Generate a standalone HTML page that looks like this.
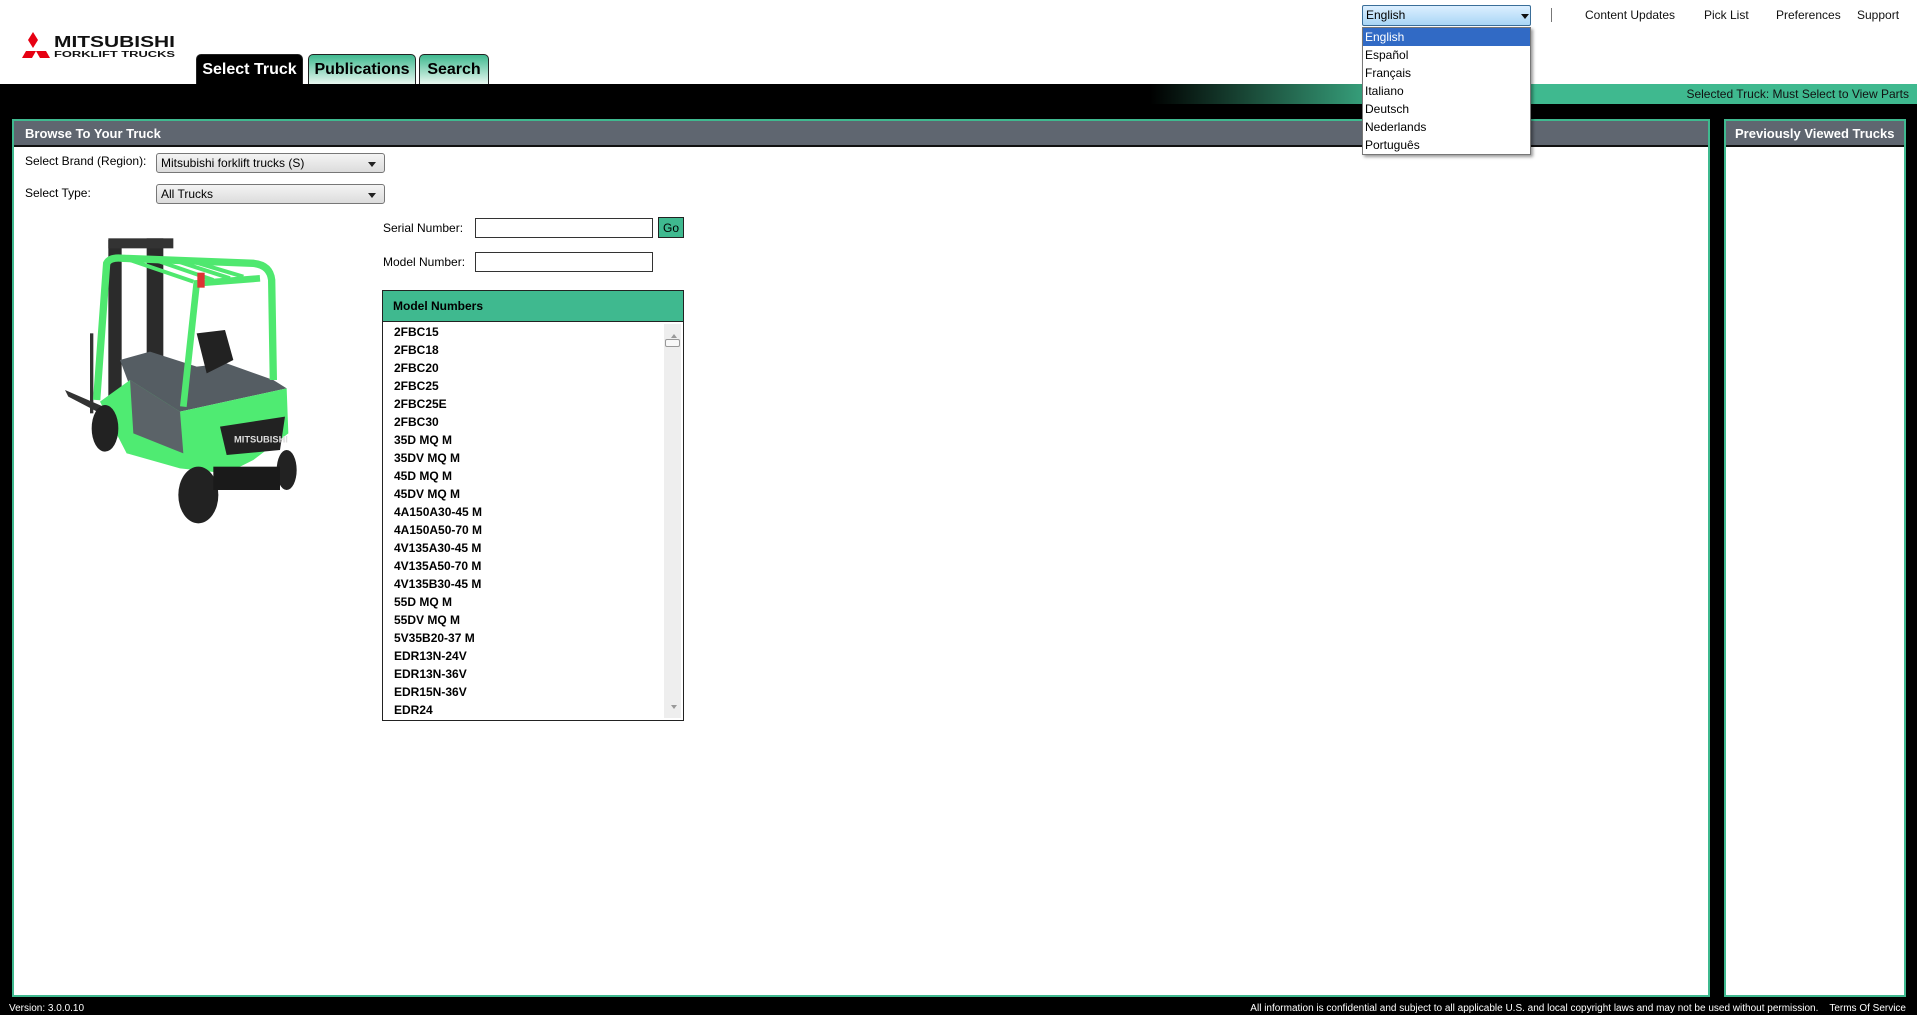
<!DOCTYPE html>
<html><head><meta charset="utf-8"><style>
*{box-sizing:border-box;margin:0;padding:0}
body{width:1917px;height:1015px;position:relative;background:#000;font-family:"Liberation Sans",Arial,sans-serif;overflow:hidden}
.abs{position:absolute}
#top{left:0;top:0;width:1917px;height:84px;background:#fff}
.tab{position:absolute;top:54px;height:30px;border:1px solid #222;border-bottom:none;border-radius:5px 5px 0 0;font-weight:bold;font-size:16px;padding:6px 0 0 0;text-align:center;background:linear-gradient(#3fb98f,#e8f7f0);color:#000;white-space:nowrap}
.nav{position:absolute;top:8px;font-size:12px;color:#111}
.sel{position:absolute;height:20px;border:1px solid #777;border-radius:3px;background:linear-gradient(#f4f4f4,#dcdcdc);font-size:12px;padding:2px 4px;color:#000}
.sel:after{content:"";position:absolute;right:8px;top:8px;border:4px solid transparent;border-top:5px solid #222}
.lbl{position:absolute;font-size:12px;color:#000}
.inp{position:absolute;background:#fff;border:1px solid #333}
.row{height:18px;font-size:12px;font-weight:bold;line-height:18px;padding-left:11px;color:#000}
</style></head><body>
<div id="top" class="abs">
<svg class="abs" style="left:22px;top:32px" width="155" height="28" viewBox="0 0 155 28">
<polygon points="11,0 16,8 11,16 6,8" fill="#e60012"/>
<polygon points="0,26 10,26 14,19 4,19" fill="#e60012"/>
<polygon points="8,19 18,19 22,26 12,26" fill="#e60012" transform="translate(6,0)"/>
<text x="32" y="15" font-family="Liberation Sans" font-weight="900" font-size="16" fill="#111" textLength="121" lengthAdjust="spacingAndGlyphs">MITSUBISHI</text>
<text x="32" y="25" font-family="Liberation Sans" font-weight="900" font-size="8" fill="#111" textLength="121" lengthAdjust="spacingAndGlyphs">FORKLIFT TRUCKS</text>
</svg>
<div class="tab" style="left:196px;width:107px;background:#000;color:#fff">Select Truck</div>
<div class="tab" style="left:308px;width:108px">Publications</div>
<div class="tab" style="left:419px;width:70px">Search</div>
<div class="abs" style="left:1551px;top:8px;width:1px;height:14px;background:#777"></div>
<div class="nav" style="left:1585px">Content Updates</div>
<div class="nav" style="left:1704px">Pick List</div>
<div class="nav" style="left:1776px">Preferences</div>
<div class="nav" style="left:1857px">Support</div>
</div>
<div class="abs" style="left:0;top:84px;width:1917px;height:20px;background:linear-gradient(90deg,#000 0,#000 1150px,#1a4a38 1250px,#3fb98f 1400px,#3fb98f 100%)"></div>
<div class="abs" style="right:8px;top:87px;font-size:12px;color:#111">Selected Truck: Must Select to View Parts</div>

<div class="abs" style="left:12px;top:119px;width:1698px;height:878px;background:#fff;border:2px solid #3fb98f">
<div style="height:26px;background:#5f6670;border-bottom:2px solid #111;color:#fff;font-weight:bold;font-size:13px;padding:5px 0 0 11px">Browse To Your Truck</div>
</div>
<div class="abs" style="left:1724px;top:119px;width:182px;height:878px;background:#fff;border:2px solid #3fb98f">
<div style="height:26px;background:#5f6670;border-bottom:2px solid #111;color:#fff;font-weight:bold;font-size:13px;padding:5px 0 0 9px">Previously Viewed Trucks</div>
</div>

<div class="lbl" style="left:25px;top:154px">Select Brand (Region):</div>
<div class="sel" style="left:156px;top:153px;width:229px">Mitsubishi forklift trucks (S)</div>
<div class="lbl" style="left:25px;top:186px">Select Type:</div>
<div class="sel" style="left:156px;top:184px;width:229px">All Trucks</div>

<div class="lbl" style="left:383px;top:221px">Serial Number:</div>
<div class="inp" style="left:475px;top:218px;width:178px;height:20px"></div>
<div class="abs" style="left:658px;top:217px;width:26px;height:21px;background:#3fb98f;border:1px solid #222;font-size:12px;text-align:center;padding-top:3px">Go</div>
<div class="lbl" style="left:383px;top:255px">Model Number:</div>
<div class="inp" style="left:475px;top:252px;width:178px;height:20px"></div>

<div class="abs" style="left:382px;top:290px;width:302px;height:431px;border:1px solid #222;background:#fff">
<div style="height:31px;background:#3fb98f;border-bottom:1px solid #222;font-weight:bold;font-size:12px;padding:8px 0 0 10px">Model Numbers</div>
<div style="padding-top:1px">
<div class="row">2FBC15</div><div class="row">2FBC18</div><div class="row">2FBC20</div><div class="row">2FBC25</div><div class="row">2FBC25E</div><div class="row">2FBC30</div><div class="row">35D MQ M</div><div class="row">35DV MQ M</div><div class="row">45D MQ M</div><div class="row">45DV MQ M</div><div class="row">4A150A30-45 M</div><div class="row">4A150A50-70 M</div><div class="row">4V135A30-45 M</div><div class="row">4V135A50-70 M</div><div class="row">4V135B30-45 M</div><div class="row">55D MQ M</div><div class="row">55DV MQ M</div><div class="row">5V35B20-37 M</div><div class="row">EDR13N-24V</div><div class="row">EDR13N-36V</div><div class="row">EDR15N-36V</div><div class="row">EDR24</div>
</div>
<div class="abs" style="right:2px;top:33px;width:17px;height:394px;background:#eee"></div>
<div class="abs" style="right:6px;top:40px;width:0;height:0;border:3px solid transparent;border-bottom:4px solid #999"></div>
<div class="abs" style="right:3px;top:48px;width:15px;height:8px;border:1px solid #999;background:#f8f8f8;border-radius:2px"></div>
<div class="abs" style="right:6px;bottom:8px;width:0;height:0;border:3px solid transparent;border-top:4px solid #999"></div>
</div>

<svg class="abs" style="left:40px;top:220px" width="280" height="320" viewBox="0 0 840 960">
<polygon points="75,510 190,560 200,590 85,530" fill="#333"/>
<rect x="205" y="60" width="40" height="520" fill="#2b2b2b"/>
<rect x="320" y="55" width="50" height="430" fill="#2b2b2b"/>
<rect x="205" y="55" width="195" height="30" fill="#333"/>
<rect x="150" y="340" width="10" height="240" fill="#333"/>
<path d="M240,420 L330,395 L470,440 L560,430 L700,480 L740,505 L420,575 L270,500 Z" fill="#555d63"/>
<path d="M180,545 L270,480 L420,575 L740,505 L745,640 L640,720 L560,760 L420,745 L260,700 Z" fill="#4feb72"/>
<path d="M270,480 L420,575 L430,700 L280,640 Z" fill="#5b6368"/>
<path d="M540,620 L735,590 L720,690 L560,705 Z" fill="#222"/>
<text x="582" y="668" font-family="Liberation Sans" font-weight="bold" font-size="28" fill="#ddd">MITSUBISHI</text>
<path d="M470,340 L555,330 L580,420 L500,460 Z" fill="#222"/>
<path d="M170,540 L200,130 Q210,110 250,115 L640,130 Q690,135 695,180 L700,480" fill="none" stroke="#4fe86f" stroke-width="22"/>
<path d="M430,560 L470,190 L660,175" fill="none" stroke="#4fe86f" stroke-width="20"/>
<path d="M270,120 L460,185 M340,118 L520,180 M400,120 L570,175 M450,122 L610,170" stroke="#4fe86f" stroke-width="12"/>
<rect x="472" y="158" width="22" height="45" fill="#d33"/>
<ellipse cx="195" cy="625" rx="40" ry="70" fill="#222"/>
<ellipse cx="475" cy="825" rx="60" ry="85" fill="#222"/>
<ellipse cx="740" cy="750" rx="30" ry="60" fill="#222"/>
<rect x="520" y="740" width="200" height="70" fill="#1a1a1a"/>
</svg>

<div class="abs" style="left:1362px;top:5px;width:169px;height:21px;border:1px solid #3a6e99;border-radius:2px;background:linear-gradient(#dcefff,#a9d6f5);font-size:12px;padding:2px 3px">English</div>
<div class="abs" style="left:1521px;top:14px;border:4px solid transparent;border-top:5px solid #111"></div>
<div class="abs" style="left:1362px;top:27px;width:169px;height:128px;background:#fff;border:1px solid #777;box-shadow:2px 2px 3px rgba(0,0,0,.4);font-size:12px;line-height:18px">
<div style="background:#316ac5;color:#fff;padding-left:2px">English</div>
<div style="padding-left:2px">Español</div><div style="padding-left:2px">Français</div><div style="padding-left:2px">Italiano</div><div style="padding-left:2px">Deutsch</div><div style="padding-left:2px">Nederlands</div><div style="padding-left:2px">Português</div>
</div>

<div class="abs" style="left:9px;top:1003px;font-size:10px;color:#fff">Version: 3.0.0.10</div>
<div class="abs" style="right:11px;top:1003px;font-size:10px;color:#fff">All information is confidential and subject to all applicable U.S. and local copyright laws and may not be used without permission. &nbsp;&nbsp; Terms Of Service</div>
</body></html>
